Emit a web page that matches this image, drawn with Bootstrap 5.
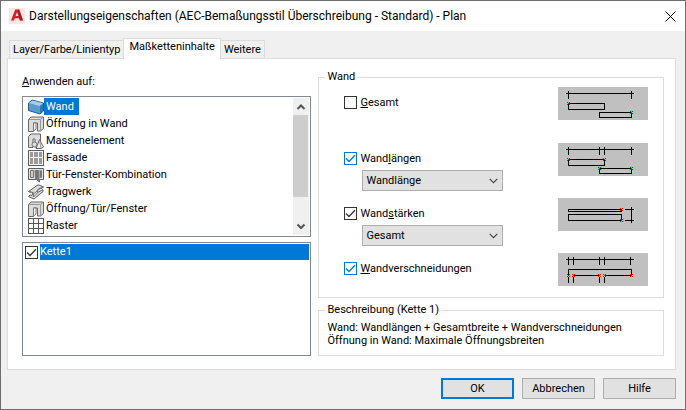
<!DOCTYPE html>
<html lang="de">
<head>
<meta charset="utf-8">
<meta name="viewport" content="width=device-width, initial-scale=1">
<title>Darstellungseigenschaften</title>
<link href="https://cdn.jsdelivr.net/npm/bootstrap@5.3.0/dist/css/bootstrap.min.css" rel="stylesheet">
<style>
:root { --accent:#0078d7; --line:#dcdcdc; --edge:#828790; }
body { font-family:Roboto,"Liberation Sans",sans-serif; font-size:11px; line-height:14px; color:#000; background:#f0f0f0; }
.dialog { border:1px solid #6e6e70; }
.titlebar { height:30px; padding:0 8px; }
.titlebar h1 { font-size:12px; line-height:16px; font-weight:400; }
.close-x { width:14px; height:14px; }
.dialog-body { padding:7px 9px 9px 6px; }
.tabs { padding-left:3px; margin-bottom:-1px; position:relative; z-index:1; }
.tabs .nav-link { padding:0 3px; margin:0 0 1px -1px; height:18px; border:1px solid var(--line); border-bottom:0; border-radius:0; background:#f0f0f0; color:#000; line-height:16px; }
.tabs .nav-link.active { height:21px; margin-bottom:0; padding:0 5px 4px; background:#fff; color:#000; border-color:var(--line); }
.panel { border:1px solid var(--line); padding:11px 11px 13px 14px; gap:7px; }
.col-list { flex:289 1 0; gap:5px; }
.col-opts { flex:345 1 0; gap:5px; }
.caption { line-height:18px; padding-top:3px; }
.listbox { border:1px solid var(--edge); padding:1px; background:#fff; }
.types { height:141px; }
.types ul { padding:0 0 0 4px; flex:1; }
.types li { height:17px; }
.types li span { padding:0 2px; line-height:17px; }
.types li span.chosen { padding-right:5px; }
.types svg { width:16px; height:16px; flex:none; }
.chosen { background:var(--accent); color:#fff; }
.scroll { width:16px; background:#f0f0f0; }
.scroll button { height:17px; width:16px; }
.thumb { height:82px; background:#cdcdcd; margin-right:1px; }
.chains { min-height:114px; flex:1; }
.chains .item { height:16px; gap:2px; padding-left:1px; }
.chains .item label { line-height:16px; }
.tick { width:13px!important; height:13px!important; margin:0!important; flex:none; border:1px solid #333; border-radius:0!important; box-shadow:none!important; background-color:#fff!important; }
.tick:checked { border-color:#333; background-size:11px 11px; background-image:url("data:image/svg+xml,%3Csvg xmlns='http://www.w3.org/2000/svg' viewBox='0 0 11 11'%3E%3Cpath d='M1 5.5l3 3L10 2.3' fill='none' stroke='%23333' stroke-width='1.3'/%3E%3C/svg%3E")!important; }
.tick.hot { border-color:var(--accent); background-image:url("data:image/svg+xml,%3Csvg xmlns='http://www.w3.org/2000/svg' viewBox='0 0 11 11'%3E%3Cpath d='M1 5.5l3 3L10 2.3' fill='none' stroke='%230078d7' stroke-width='1.3'/%3E%3C/svg%3E")!important; }
.group { border:1px solid var(--line); margin:0; min-width:0; }
.group legend { float:none; width:auto; font-size:11px; line-height:14px; margin:0 0 0 6px; padding:0 2px; }
.wall { padding:0 15px 0 0; height:228px; }
.wall .opt { height:55px; padding-left:25px; }
.wall legend + .opt { height:56px; margin-top:3px; }
.opt .check { height:13px; margin-top:9px; gap:3px; }
.opt .check label { line-height:13px; }
.opt select { display:block; width:141px; height:21px; margin:5px 0 0 18px; padding:0 20px 0 3px; border:1px solid #adadad; border-radius:0; color:#000; background:#e1e1e1 url("data:image/svg+xml,%3Csvg xmlns='http://www.w3.org/2000/svg' viewBox='0 0 9 6'%3E%3Cpath d='M.7.8l3.8 3.8L8.3.8' fill='none' stroke='%23444' stroke-width='1.2'/%3E%3C/svg%3E") no-repeat right 4px center/9px 6px; appearance:none; line-height:18px; }
.opt svg { width:90px; height:33px; background:#c0c0c0; shape-rendering:crispEdges; flex:none; }
.about { height:53px; }
.about p { padding:4px 8px 0; line-height:13px; margin:0; }
.actions { gap:8px; padding-top:8px; }
.actions .btn { width:73px; height:21px; padding:0; font-size:11px; line-height:18px; border:1px solid #adadad; border-radius:0; background:#e1e1e1; color:#000; }
.actions .btn.default { border:2px solid var(--accent); }
</style>
<script src="https://cdn.jsdelivr.net/npm/bootstrap@5.3.0/dist/js/bootstrap.bundle.min.js"></script>
</head>
<body>
<svg class="position-absolute" width="0" height="0" aria-hidden="true">
  <symbol id="hit" viewBox="0 0 3 3"><path d="M0 0h1v1H0zM2 0h1v1H2zM1 1h1v1H1zM0 2h1v1H0zM2 2h1v1H2z" fill="#f00"/></symbol>
  <symbol id="opening" viewBox="0 0 16 16"><path d="M.5 3.500L3 1h12.500v11.500L12.500 15H9.500V7h-4v8.500h-5z" fill="#dcdcdc" stroke="#666"/><path d="M1 3.500h11.500V15M12.500 3.500L15 1.500" fill="none" stroke="#999"/><path d="M5.500 15V7h2.500v6z" fill="#fff" stroke="#777"/></symbol>
</svg>
<main class="dialog min-vh-100">
  <header class="titlebar bg-white d-flex align-items-center">
    <svg width="16" height="16" viewBox="0 0 16 16" aria-hidden="true"><path fill="#fbe3df" d="M0 0h16v16H0z"/><path fill="#c3242f" d="M6.200 1.500h4L14 12.500h-3l-.8-2.200H5.800L5 12.500H2zM8 4.300L6.600 8h3z"/><path fill="#8f1219" d="M9 1.500h1.200L14 12.500h-3l-.8-2.200z" opacity=".6"/></svg>
    <h1 class="m-0 ms-1 flex-grow-1">Darstellungseigenschaften (AEC-Bemaßungsstil Überschreibung - Standard) - Plan</h1>
    <button type="button" class="close-x border-0 bg-transparent p-0 d-flex align-items-center justify-content-center" aria-label="Schließen"><svg width="11" height="11" viewBox="0 0 11 11"><path d="M.5.500l10 10M10.500.5l-10 10" stroke="#000" fill="none"/></svg></button>
  </header>
  <div class="dialog-body">
    <nav class="tabs nav align-items-end" role="tablist">
      <button class="nav-link" role="tab" type="button">Layer/Farbe/Linientyp</button>
      <button class="nav-link active" role="tab" type="button" aria-selected="true">Maßketteninhalte</button>
      <button class="nav-link" role="tab" type="button">Weitere</button>
    </nav>
    <section class="panel bg-white d-flex">
      <div class="col-list d-flex flex-column">
        <div id="apply" class="caption"><u>A</u>nwenden auf:</div>
        <div class="listbox types d-flex overflow-hidden">
          <ul class="list-unstyled m-0" role="listbox" aria-labelledby="apply">
            <li class="d-flex align-items-center" role="option" aria-selected="true"><svg viewBox="0 0 16 16"><path d="M.5 4L4 1l11.500 3v8L12 15 .5 11.500z" fill="#5b9bd1" stroke="#245a8c"/><path d="M1 4L4.500 1.500 15 4.300 11.500 7z" fill="#a5cdec"/><path d="M12 7l3-2.300V12l-3 2.300z" fill="#3277b0"/></svg><span class="chosen">Wand</span></li>
            <li class="d-flex align-items-center" role="option"><svg><use href="#opening"/></svg><span>Öffnung in Wand</span></li>
            <li class="d-flex align-items-center" role="option"><svg viewBox="0 0 16 16"><path d="M.5 3.500L3 1h9.500V8L9 14H7V6H5v8.500H.5z" fill="#dcdcdc" stroke="#666"/><path d="M11.500 6.500l4 7.500-2 1.500H8z" fill="#eee" stroke="#666"/><path d="M11.500 7l1.500 8" stroke="#999"/><circle cx="6.500" cy="11.500" r="2.500" fill="#ddd" stroke="#777"/></svg><span>Massenelement</span></li>
            <li class="d-flex align-items-center" role="option"><svg viewBox="0 0 16 16" shape-rendering="crispEdges"><path fill="#5c5c5c" d="M0 0h16v16H0z"/><path fill="#f4f4f4" d="M1 1h14v14H1z"/><path fill="#999" d="M2 2h3v5H2zM6 2h4v5H6zM11 2h3v5h-3zM2 8h3v6H2zM6 8h4v6H6zM11 8h3v6h-3z"/></svg><span>Fassade</span></li>
            <li class="d-flex align-items-center" role="option"><svg viewBox="0 0 16 16"><path d="M.5 1.500h15v11h-4v2.500l-3-2.500H.500z" fill="#e4e4e4" stroke="#5c5c5c"/><path d="M2.500 3.500h3v7h-3zM12.500 3.500h1v7h-1z" fill="#ccc" stroke="#777"/><path d="M6.500 3h5v11.500L7 11.500z" fill="#777"/></svg><span>Tür-Fenster-Kombination</span></li>
            <li class="d-flex align-items-center" role="option"><svg viewBox="0 0 16 16"><path d="M.5 7.500L10 .8l5.500 2L14 4.500l-2-.5-3 2.500.5 2L15 5.500v2L6 15l-5.500-2.500 1.500-1.500 2 .5 1-3z" fill="#ddd" stroke="#5c5c5c"/><path d="M.5 7.500L6 9.500l9-7M5.500 9.500V13l4-4" fill="none" stroke="#777"/></svg><span>Tragwerk</span></li>
            <li class="d-flex align-items-center" role="option"><svg><use href="#opening"/></svg><span>Öffnung/Tür/Fenster</span></li>
            <li class="d-flex align-items-center" role="option"><svg viewBox="0 0 16 16" shape-rendering="crispEdges"><path d="M.5.500h15v15H.500zM.5 5.500h15M.5 10.500h15M5.500.500v15M10.500.500v15" fill="#fff" stroke="#555"/></svg><span>Raster</span></li>
          </ul>
          <div class="scroll">
            <button type="button" class="border-0 bg-transparent p-0 d-flex align-items-center justify-content-center" aria-label="Nach oben"><svg viewBox="0 0 16 16"><path d="M4.500 10L8 6.500l3.500 3.500" fill="none" stroke="#555" stroke-width="2"/></svg></button>
            <div class="thumb"></div>
            <button type="button" class="border-0 bg-transparent p-0 d-flex align-items-center justify-content-center mt-3 pt-2" aria-label="Nach unten"><svg viewBox="0 0 16 16"><path d="M4.500 6.500L8 10l3.500-3.500" fill="none" stroke="#555" stroke-width="2"/></svg></button>
          </div>
        </div>
        <div class="listbox chains">
          <div class="item d-flex align-items-center"><input class="form-check-input tick" type="checkbox" id="k1" checked><label class="chosen flex-grow-1" for="k1">Kette1</label></div>
        </div>
      </div>
      <div class="col-opts d-flex flex-column">
        <fieldset class="group wall">
          <legend>Wand</legend>
          <div class="opt d-flex justify-content-between">
            <div><div class="check d-flex align-items-center"><input class="form-check-input tick" type="checkbox" id="o1"><label for="o1"><u>G</u>esamt</label></div></div>
            <svg viewBox="0 0 90 33"><path d="M8 6.500h68M10.500 4v8M73.500 4v8M10.500 16.500h36v6h-36zM41.500 25.500h32v5h-32z" fill="none" stroke="#000"/><use href="#hit" x="9" y="15" width="3" height="3"/><use href="#hit" x="72" y="24" width="3" height="3"/></svg>
          </div>
          <div class="opt d-flex justify-content-between">
            <div><div class="check d-flex align-items-center"><input class="form-check-input tick hot" type="checkbox" id="o2" checked><label for="o2">Wand<u>l</u>ängen</label></div>
            <select aria-label="Wandlängen"><option>Wandlänge</option></select></div>
            <svg viewBox="0 0 90 33"><path d="M8 6.500h68M10.500 4v8M41.500 4v8M46.500 4v8M73.500 4v8M10.500 16.500h36v6h-36zM41.500 25.500h32v5h-32z" fill="none" stroke="#000"/><use href="#hit" x="9" y="15" width="3" height="3"/><use href="#hit" x="45" y="15" width="3" height="3"/><use href="#hit" x="40" y="24" width="3" height="3"/><use href="#hit" x="72" y="24" width="3" height="3"/></svg>
          </div>
          <div class="opt d-flex justify-content-between">
            <div><div class="check d-flex align-items-center"><input class="form-check-input tick" type="checkbox" id="o3" checked><label for="o3">Wand<u>s</u>tärken</label></div>
            <select aria-label="Wandstärken"><option>Gesamt</option></select></div>
            <svg viewBox="0 0 90 33"><path d="M10.500 11.500h53v2h-53zM10.500 16.500h53v6h-53zM67 11.500h9M67 22.500h9M73.500 9v16" fill="none" stroke="#000"/><use href="#hit" x="62" y="10" width="3" height="3"/><use href="#hit" x="62" y="21" width="3" height="3"/></svg>
          </div>
          <div class="opt d-flex justify-content-between">
            <div><div class="check d-flex align-items-center"><input class="form-check-input tick hot" type="checkbox" id="o4" checked><label for="o4"><u>W</u>andverschneidungen</label></div></div>
            <svg viewBox="0 0 90 33"><path d="M8 6.500h68M10.500 4v8M15.500 4v8M41.500 4v8M46.500 4v8M72.500 4v8M10.500 22V16.500h63v6H46M15 22.500h27M10.500 24v6M15.500 24v6M41.500 24v6M46.500 24v6" fill="none" stroke="#000"/><use href="#hit" x="9" y="21" width="3" height="3"/><use href="#hit" x="14" y="21" width="3" height="3"/><use href="#hit" x="40" y="21" width="3" height="3"/><use href="#hit" x="45" y="21" width="3" height="3"/><use href="#hit" x="72" y="21" width="3" height="3"/></svg>
          </div>
        </fieldset>
        <fieldset class="group about mt-auto">
          <legend>Beschreibung (Kette 1)</legend>
          <p>Wand: Wandlängen + Gesamtbreite + Wandverschneidungen<br>Öffnung in Wand: Maximale Öffnungsbreiten</p>
        </fieldset>
      </div>
    </section>
    <footer class="actions d-flex justify-content-end">
      <button type="button" class="btn default">OK</button>
      <button type="button" class="btn">Abbrechen</button>
      <button type="button" class="btn">Hilfe</button>
    </footer>
  </div>
</main>
</body>
</html>
